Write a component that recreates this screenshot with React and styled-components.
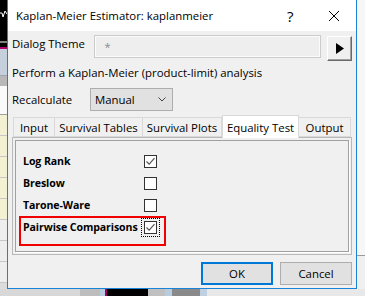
import React from 'react';
import styled, { createGlobalStyle } from 'styled-components';

const GlobalStyle = createGlobalStyle`
  html, body {
    margin: 0;
    padding: 0;
    background: #e6e6e6;
  }
  body {
    font-family: "Open Sans", "Noto Sans", sans-serif;
    font-size: 11.4px;
    color: #000;
  }
`;

const Desktop = styled.div`
  width: 365px;
  height: 296px;
  overflow: hidden;
  display: grid;
  grid-template-columns: 7px 350px 8px;
  grid-template-rows: 289px 7px;
`;

const SideStrip = styled.div`
  display: flex;
  flex-direction: column;
  background: ${(p) => p.bg};
`;

const Segment = styled.div`
  flex: 0 0 ${(p) => p.h}px;
  background: ${(p) => p.bg};
  border-bottom: ${(p) => (p.line ? `1px solid ${p.line}` : 'none')};
`;

const BottomStrip = styled.div`
  grid-column: 1 / 4;
  display: flex;
  background: #e4e4e4;
`;

const Piece = styled.div`
  flex: 0 0 ${(p) => p.w}px;
  background: ${(p) => p.bg};
`;

const Window = styled.div`
  box-sizing: border-box;
  display: flex;
  flex-direction: column;
  background: #f0f0f0;
  border: 1px solid #1883d7;
  border-top: none;
`;

const TitleBar = styled.div`
  height: 31px;
  flex: 0 0 31px;
  display: flex;
  align-items: center;
  background: #fff;
  padding-left: 8px;
`;

const Title = styled.span`
  flex: 1;
  font-size: 11.4px;
  margin-top: -1px;
`;

const HelpGlyph = styled.span`
  font-size: 15px;
  width: 10px;
  margin-right: 32px;
`;

const CloseButton = styled.div`
  width: 10px;
  height: 10px;
  margin-right: 17px;
  display: flex;
`;

const Body = styled.div`
  display: flex;
  flex-direction: column;
  padding: 0 4px;
  white-space: nowrap;
`;

const ThemeRow = styled.div`
  display: flex;
  align-items: flex-start;
  margin-top: 4px;
  height: 26px;
`;

const RowLabel = styled.span`
  width: ${(p) => p.w}px;
  line-height: ${(p) => p.lh}px;
`;

const ThemeInput = styled.div`
  box-sizing: border-box;
  width: 228px;
  height: 23px;
  border: 1px solid #cccccc;
  box-shadow: inset 0 0 0 1px #fbfbfb;
  background: #eeeeee;
  color: #8a8a8a;
  padding-left: 9px;
  line-height: 21px;
  font-size: 11px;
`;

const ArrowButton = styled.div`
  box-sizing: border-box;
  width: 25px;
  height: 25px;
  margin: 1px 0 0 6px;
  background: #f0f0f0;
  border-top: 1px solid #fff;
  border-left: 1px solid #fff;
  border-right: 1px solid #696969;
  border-bottom: 1px solid #696969;
  box-shadow: inset -1px -1px 0 #a0a0a0;
  display: flex;
  align-items: center;
  justify-content: center;
`;

const Intro = styled.div`
  margin-top: 4px;
  line-height: 16px;
`;

const RecalcRow = styled.div`
  display: flex;
  align-items: center;
  margin-top: 7px;
  height: 23px;
`;

const Dropdown = styled.div`
  box-sizing: border-box;
  width: 83px;
  height: 23px;
  display: flex;
  align-items: center;
  justify-content: space-between;
  padding: 0 6px 0 4px;
  background: #e1e1e1;
  border: 1px solid #adadad;
`;

const TabStrip = styled.div`
  display: flex;
  align-items: flex-end;
  margin-top: 4px;
  height: 22px;
  padding-left: 1px;
  position: relative;
  z-index: 1;
`;

const Tab = styled.div`
  box-sizing: border-box;
  width: ${(p) => p.w}px;
  height: ${(p) => (p.active ? 23 : 20)}px;
  margin-bottom: ${(p) => (p.active ? -1 : 0)}px;
  background: ${(p) => (p.active ? '#fff' : '#f0f0f0')};
  border: 1px solid #d9d9d9;
  border-bottom: ${(p) => (p.active ? 'none' : '1px solid #d9d9d9')};
  border-left: ${(p) => (p.first || p.active ? '1px solid #d9d9d9' : 'none')};
  display: flex;
  align-items: center;
  justify-content: center;
  padding-top: ${(p) => (p.active ? 0 : 1)}px;
`;

const Panel = styled.div`
  box-sizing: border-box;
  width: 340px;
  height: 118px;
  border: 1px solid #b9b9b9;
  padding: 2px;
  display: flex;
`;

const PanelInner = styled.div`
  flex: 1;
  border: 1px solid #a0a0a0;
  box-shadow: 1px 1px 0 #fff;
  padding: 9px 0 0 7px;
  display: flex;
  flex-direction: column;
`;

const OptionRow = styled.div`
  position: relative;
  display: flex;
  align-items: center;
  height: 22px;
`;

const OptionLabel = styled.span`
  width: 121px;
  font-weight: bold;
  font-size: 10.6px;
  letter-spacing: -0.1px;
`;

const Highlight = styled.div`
  position: absolute;
  top: 0;
  left: -4px;
  width: 147px;
  height: 30px;
  box-sizing: border-box;
  border: 2px solid #f00000;
  pointer-events: none;
`;

const FocusRing = styled.div`
  padding: 2px;
  margin: -3px;
  border: 1px dotted #000;
  display: flex;
`;

const Box = styled.div`
  box-sizing: border-box;
  width: 13px;
  height: 13px;
  border: 1px solid #333;
  background: #fff;
  display: flex;
  align-items: center;
  justify-content: center;
`;

const ButtonRow = styled.div`
  display: flex;
  justify-content: flex-end;
  gap: 7px;
  margin-top: 7px;
`;

const DialogButton = styled.div`
  box-sizing: border-box;
  width: 72px;
  height: 23px;
  background: #e1e1e1;
  border: ${(p) => (p.primary ? '2px solid #0078d7' : '1px solid #adadad')};
  display: flex;
  align-items: center;
  justify-content: center;
`;

function Checkbox({ checked, focused }) {
	const box = (
		<Box>
			{checked && (
				<svg width="11" height="11" viewBox="0 0 11 11">
					<path d="M1.5 5.5 L4.2 8.2 L9.5 2.2" fill="none" stroke="#555" strokeWidth="1.2" />
				</svg>
			)}
		</Box>
	);
	return focused ? <FocusRing>{box}</FocusRing> : box;
}

const tabs = [
	{ label: 'Input', w: 42 },
	{ label: 'Survival Tables', w: 88 },
	{ label: 'Survival Plots', w: 79 },
	{ label: 'Equality Test', w: 77, active: true },
	{ label: 'Output', w: 52 },
];

const options = [
	{ label: 'Log Rank', checked: true },
	{ label: 'Breslow', checked: false },
	{ label: 'Tarone-Ware', checked: false },
	{ label: 'Pairwise Comparisons', checked: true, focused: true, marked: true },
];

export default function App() {
	return (
		<>
			<GlobalStyle />
			<Desktop>
				<SideStrip bg="#dcdcdc">
					<Segment h={38} bg="#000">
						<svg width="7" height="38" viewBox="0 0 7 38">
							<path d="M0 13 L2 13 L3 17 L5 11 L7 14" fill="none" stroke="#fff" strokeWidth="1" />
						</svg>
					</Segment>
					<Segment h={2} bg="#808080" />
					<Segment h={4} bg="#000" />
					<Segment h={2} bg="#b0006e" />
					<Segment h={26} bg="#c6d0dc" line="#9aa6b4" />
					<Segment h={10} bg="#b8b8b8" />
					<Segment h={28} bg="#fafafa" line="#a0a0a0" />
					<Segment h={20} bg="#f3f1d2" line="#c8c8c8" />
					<Segment h={20} bg="#f3f1d2" line="#c8c8c8" />
					<Segment h={20} bg="#f3f1d2" line="#c8c8c8" />
					<Segment h={20} bg="#f3f1d2" line="#c8c8c8" />
					<Segment h={20} bg="#f3f1d2" line="#c8c8c8" />
					<Segment h={20} bg="#eeeeee" line="#c8c8c8" />
					<Segment h={20} bg="#eeeeee" line="#c8c8c8" />
					<Segment h={20} bg="#eeeeee" line="#c8c8c8" />
				</SideStrip>
				<Window>
					<TitleBar>
						<Title>Kaplan-Meier Estimator: kaplanmeier</Title>
						<HelpGlyph>?</HelpGlyph>
						<CloseButton>
							<svg width="10" height="10" viewBox="0 0 10 10">
								<path d="M0 0 L10 10 M10 0 L0 10" stroke="#000" strokeWidth="1" />
							</svg>
						</CloseButton>
					</TitleBar>
					<Body>
						<ThemeRow>
							<RowLabel w={83} lh={18}>Dialog Theme</RowLabel>
							<ThemeInput>*</ThemeInput>
							<ArrowButton>
								<svg width="8" height="11" viewBox="0 0 8 11">
									<path d="M0 0 L8 5.5 L0 11 Z" fill="#000" />
								</svg>
							</ArrowButton>
						</ThemeRow>
						<Intro>Perform a Kaplan-Meier (product-limit) analysis</Intro>
						<RecalcRow>
							<RowLabel w={78} lh={18}>Recalculate</RowLabel>
							<Dropdown>
								<span>Manual</span>
								<svg width="8" height="5" viewBox="0 0 8 5">
									<path d="M0.5 0.5 L4 4 L7.5 0.5" fill="none" stroke="#444" strokeWidth="1" />
								</svg>
							</Dropdown>
						</RecalcRow>
						<TabStrip>
							{tabs.map((t, i) => (
								<Tab key={t.label} w={t.w} active={t.active} first={i === 0}>
									{t.label}
								</Tab>
							))}
						</TabStrip>
						<Panel>
							<PanelInner>
								{options.map((o) => (
									<OptionRow key={o.label}>
										<OptionLabel>{o.label}</OptionLabel>
										<Checkbox checked={o.checked} focused={o.focused} />
										{o.marked && <Highlight />}
									</OptionRow>
								))}
							</PanelInner>
						</Panel>
						<ButtonRow>
							<DialogButton primary>OK</DialogButton>
							<DialogButton>Cancel</DialogButton>
						</ButtonRow>
					</Body>
				</Window>
				<SideStrip bg="#f4f4f4">
					<Segment h={255} bg="#f7f7f7" />
					<Segment h={1} bg="#9a9a9a" />
					<Segment h={33} bg="#f0f0f0" />
				</SideStrip>
				<BottomStrip>
					<Piece w={80} bg="#d8d8d8" />
					<Piece w={20} bg="#bdbdbd" />
					<Piece w={5} bg="#b8cce0" />
					<Piece w={2} bg="#a0006a" />
					<Piece w={41} bg="#000" />
					<Piece w={17} bg="#c0c0c0" />
					<Piece w={7} bg="#b8cce0" />
					<Piece w={28} bg="#8a8a8a" />
					<Piece w={7} bg="#c0d0e0" />
					<Piece w={158} bg="#e8e8e8" />
				</BottomStrip>
			</Desktop>
		</>
	);
}
